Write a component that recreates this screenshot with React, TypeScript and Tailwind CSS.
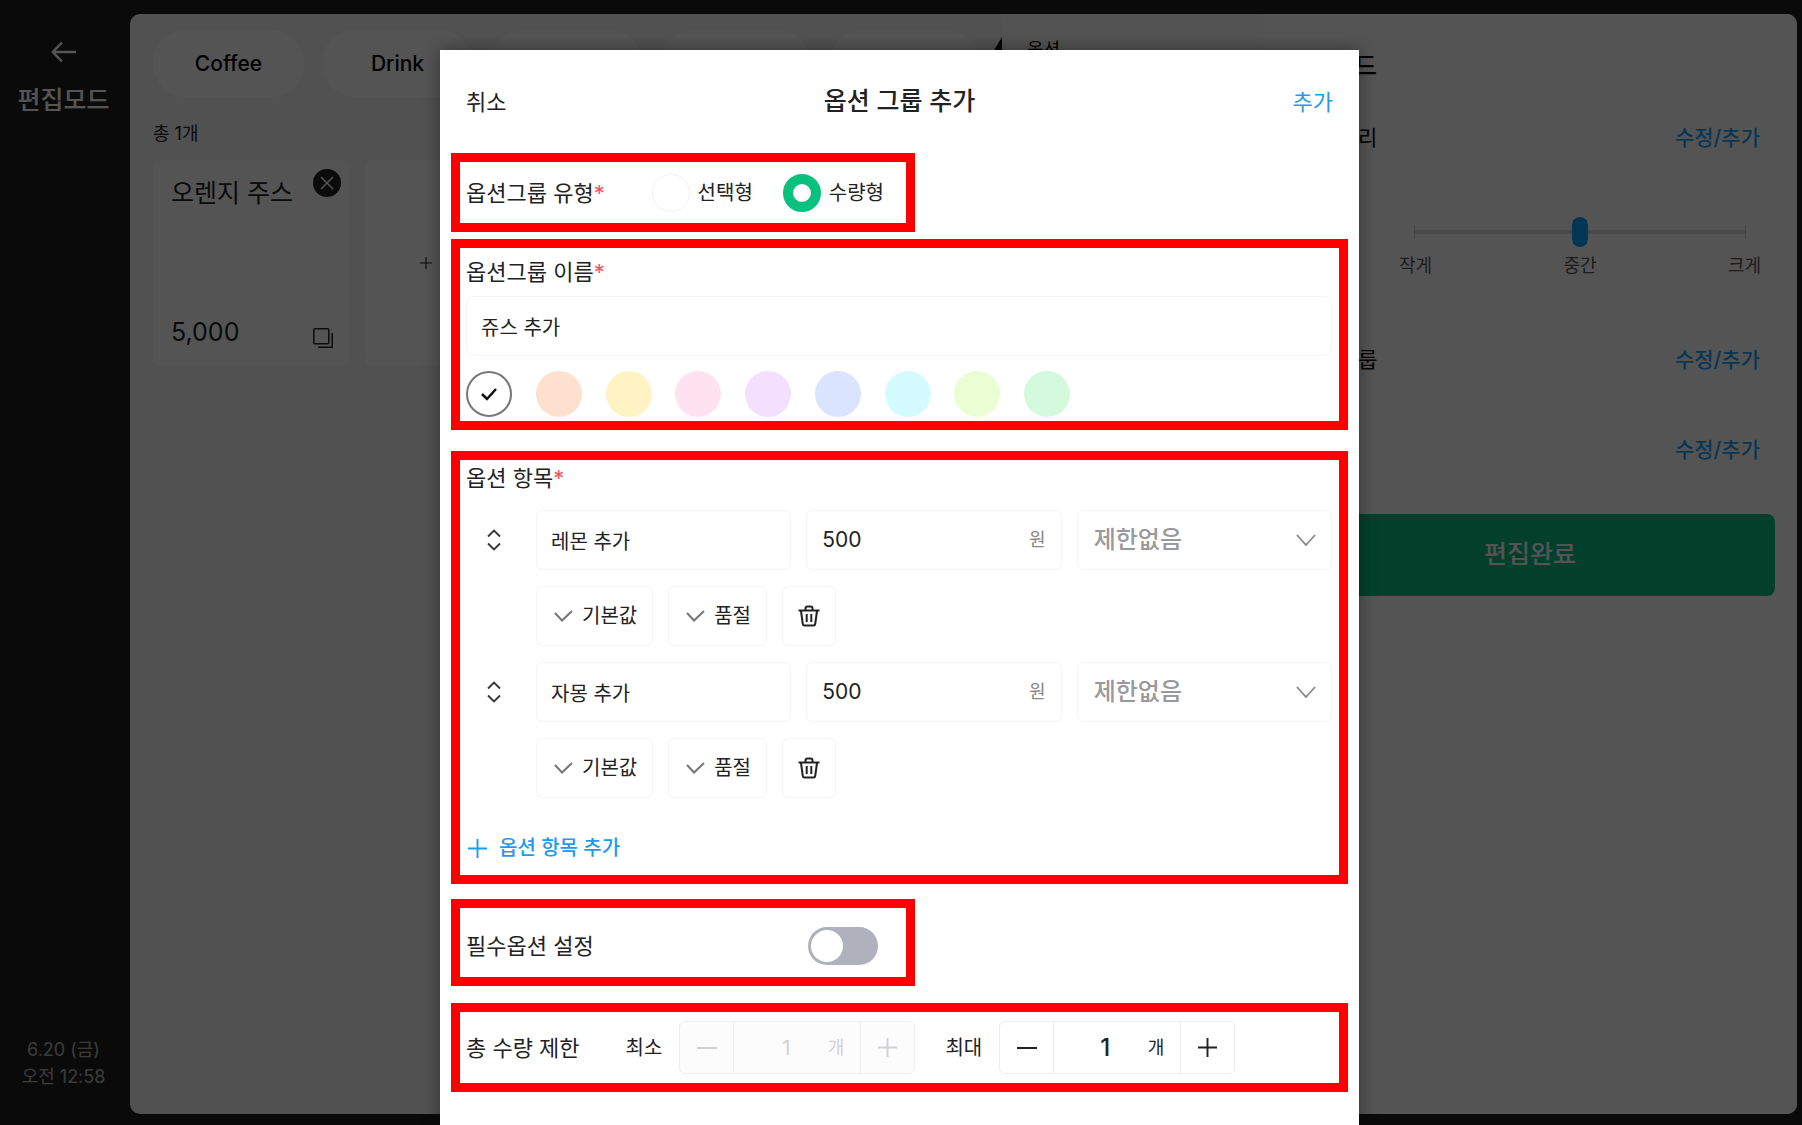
import { useState, type ReactNode } from "react";

const SWATCHES = [
  { name: "흰색", color: "bg-white" },
  { name: "살구색", color: "bg-[#fee0ce]" },
  { name: "노란색", color: "bg-[#fff3c4]" },
  { name: "분홍색", color: "bg-[#fee2ef]" },
  { name: "보라색", color: "bg-[#f3dffe]" },
  { name: "파란색", color: "bg-[#dae4ff]" },
  { name: "하늘색", color: "bg-[#d4fbff]" },
  { name: "연두색", color: "bg-[#ebfed3]" },
  { name: "초록색", color: "bg-[#d4fadd]" },
];

const ITEMS = ["레몬 추가", "자몽 추가"];

const TABS = ["Coffee", "Drink", "Tea", "Dessert", "Bakery"];

export default function App() {
  return (
    <div className="relative flex h-screen overflow-hidden bg-[#212121] pt-3.5 pr-[5px] pb-[11px] font-['Inter','Noto_Sans_CJK_KR',sans-serif] text-[#222]">
      <Sidebar />
      <main className="flex min-w-0 flex-1 overflow-hidden rounded-[10px] bg-[#f5f5f5]">
        <MenuBoard />
        <OrderPanel />
        <EditPanel />
      </main>

      <div className="absolute inset-0 flex justify-center bg-black/67 pt-[50px] pr-[3px]">
        <OptionGroupModal />
      </div>
    </div>
  );
}

function Sidebar() {
  return (
    <aside className="flex w-[130px] shrink-0 flex-col items-center pr-[3px] text-white">
      <button aria-label="뒤로" className="mt-[23px]">
        <svg viewBox="0 0 26 30" fill="none" stroke="currentColor" strokeWidth="2.500" className="h-[30px] w-[26px]">
          <path d="M25 15H2M11 5.500L1.800 15L11 24.500" />
        </svg>
      </button>
      <div className="mt-[17px] text-[25px] leading-8 font-medium">편집모드</div>
      <div className="mt-auto mb-6 text-center text-lg leading-[27px] text-[#b4b4b4]">
        <div>6.20 (금)</div>
        <div>오전 12:58</div>
      </div>
    </aside>
  );
}

function MenuBoard() {
  return (
    <section className="min-w-0 flex-1 overflow-hidden pt-4 pl-[23px]">
      <nav className="flex gap-[18px]">
        {TABS.map((tab) => (
          <button key={tab} className="h-[67px] w-[151px] shrink-0 rounded-full bg-white text-[21px] font-medium text-black">
            {tab}
          </button>
        ))}
      </nav>
      <div className="mt-[23px] text-lg">총 1개</div>

      <div className="mt-3 flex gap-4">
        <article className="flex h-[206px] w-[196px] shrink-0 flex-col justify-between rounded-lg bg-white pt-[9px] pr-2 pb-[18px] pl-[18px]">
          <div className="flex items-start justify-between">
            <h3 className="mt-2 text-[25px] leading-8">오렌지 주스</h3>
            <button aria-label="삭제" className="flex size-7 items-center justify-center rounded-full bg-[#222] text-white">
              <svg viewBox="0 0 14 14" fill="none" stroke="currentColor" strokeWidth="1.500" className="size-3.5">
                <path d="M1 1L13 13M13 1L1 13" />
              </svg>
            </button>
          </div>
          <div className="flex items-end justify-between pr-2">
            <span className="text-[25px] leading-8">5,000</span>
            <button aria-label="복사">
              <svg viewBox="0 0 20 20" fill="none" stroke="currentColor" strokeWidth="1.500" className="size-5">
                <rect x="0.800" y="0.800" width="15" height="15" rx="1" />
                <path d="M19.200 5V19.200H5" />
              </svg>
            </button>
          </div>
        </article>
        <button aria-label="메뉴 추가" className="flex h-[206px] w-[196px] shrink-0 items-center rounded-lg bg-white pl-[55px]">
          <Plus className="size-3" />
        </button>
      </div>
    </section>
  );
}

function OrderPanel() {
  return (
    <section className="relative w-[262px] shrink-0 bg-[#fcfcfc] pt-[22px] pl-[26px] text-lg text-black">
      옵션
      <svg viewBox="0 0 12 26" fill="#111" className="absolute top-[23px] -left-[11px] h-[26px] w-3">
        <path d="M12 0V26H0V20Z" />
      </svg>
    </section>
  );
}

function EditPanel() {
  return (
    <section className="w-[534px] shrink-0 bg-white px-[22px] pt-9 text-black">
      <h2 className="text-[25px] leading-8 font-medium">편집모드</h2>
      <EditRow label="카테고리" className="mt-[17px] h-[78px]" />
      <div className="flex h-[138px] items-start justify-between pt-10 pr-3.5 pl-4">
        <label htmlFor="size" className="text-[21px]">크기</label>
        <div className="w-[362px] text-lg text-[#555]">
          <div className="mx-[15px] flex items-center">
            <div className="h-3 w-px bg-[#ccc]" />
            <input
              id="size"
              type="range"
              min={0}
              max={2}
              defaultValue={1}
              className="h-[30px] min-w-0 flex-1 appearance-none bg-[linear-gradient(#dedede,#dedede)] bg-[length:100%_4px] bg-center bg-no-repeat [&::-webkit-slider-thumb]:h-[30px] [&::-webkit-slider-thumb]:w-4 [&::-webkit-slider-thumb]:appearance-none [&::-webkit-slider-thumb]:rounded-full [&::-webkit-slider-thumb]:bg-[#0aa0ff]"
            />
            <div className="h-3 w-px bg-[#ccc]" />
          </div>
          <div className="mt-1.5 flex justify-between leading-[26px]">
            <span>작게</span>
            <span>중간</span>
            <span>크게</span>
          </div>
        </div>
      </div>
      <EditRow label="옵션그룹" className="h-[90px]" />
      <EditRow label="할인" className="h-[90px]" />
      <button className="mt-[19px] h-[82px] w-full rounded-lg bg-[#0cc183] text-[25px] font-medium text-white">편집완료</button>
    </section>
  );
}

function EditRow({ label, className }: { label: string; className: string }) {
  return (
    <div className={`flex items-center justify-between px-[15px] text-[21px] ${className}`}>
      <span>{label}</span>
      <button className="font-medium text-[#1da5ff]">수정/추가</button>
    </div>
  );
}

function OptionGroupModal() {
  const [color, setColor] = useState(0);
  return (
    <div role="dialog" aria-labelledby="modal-title" className="w-[919px] max-w-full bg-white px-[11px] shadow-[0_0_16px_rgba(0,0,0,0.4)]">
      <header className="flex h-[103px] items-center justify-between px-[15px] pt-px text-[22px]">
        <button>취소</button>
        <h1 id="modal-title" className="text-[25px] font-medium">옵션 그룹 추가</h1>
        <button className="text-[#1d9bf0]">추가</button>
      </header>

      <Framed className="flex h-[79px] w-[464px] items-center">
        <Label required>옵션그룹 유형</Label>
        <div className="ml-auto flex gap-[30px] pr-[15px]">
          <TypeRadio label="선택형" />
          <TypeRadio label="수량형" checked />
        </div>
      </Framed>

      <Framed className="mt-[7px] pt-2 pb-1">
        <Label required htmlFor="group-name">옵션그룹 이름</Label>
        <input
          id="group-name"
          defaultValue="쥬스 추가"
          className="mt-2 block h-[60px] w-full rounded-lg border border-[#f4f4f4] px-3.5 text-xl"
        />
        <div className="mt-[15px] flex w-[604px] justify-between">
          {SWATCHES.map((swatch, i) => (
            <button
              key={swatch.name}
              aria-label={swatch.name}
              onClick={() => setColor(i)}
              className={`flex size-[46px] items-center justify-center rounded-full ${swatch.color} ${color === i ? "border-2 border-[#777]" : ""}`}
            >
              {color === i && (
                <svg viewBox="0 0 16 14" fill="none" stroke="#111" strokeWidth="2.500" className="h-3.5 w-4">
                  <path d="M1 7L6 12L15 2" />
                </svg>
              )}
            </button>
          ))}
        </div>
      </Framed>

      <Framed className="mt-[21px] h-[433px] pt-0.5">
        <Label required>옵션 항목</Label>
        <div className="mt-4 flex flex-col gap-4">
          {ITEMS.map((item) => (
            <OptionItem key={item} name={item} />
          ))}
        </div>
        <button className="mt-9 flex items-center gap-3 pl-0.5 text-xl font-medium text-[#1d9bf0]">
          <Plus className="size-[19px]" /> 옵션 항목 추가
        </button>
      </Framed>

      <Framed className="mt-[15px] flex h-[87px] w-[464px] items-center justify-between pt-1.5">
        <Label htmlFor="required">필수옵션 설정</Label>
        <input
          id="required"
          type="checkbox"
          role="switch"
          className="mr-[21px] flex h-[38px] w-[70px] appearance-none items-center rounded-full bg-[#afb2bd] p-[3px] before:size-8 before:rounded-full before:bg-white checked:justify-end checked:bg-[#09c17f]"
        />
      </Framed>

      <Framed className="mt-[17px] flex h-[89px] items-center">
        <Label>총 수량 제한</Label>
        <div className="ml-[46px] flex gap-[30px]">
          <Stepper id="min" label="최소" disabled />
          <Stepper id="max" label="최대" />
        </div>
      </Framed>
    </div>
  );
}

function Framed({ className, children }: { className: string; children: ReactNode }) {
  return <section className={`border-[9px] border-[#ff0000] pr-[7px] pl-1.5 ${className}`}>{children}</section>;
}

function Label({ children, required, htmlFor }: { children: ReactNode; required?: boolean; htmlFor?: string }) {
  return (
    <label htmlFor={htmlFor} className="text-[22px] leading-8">
      {children}
      {required && <span className="text-[#f5545e]">*</span>}
    </label>
  );
}

function TypeRadio({ label, checked }: { label: string; checked?: boolean }) {
  return (
    <label className="flex items-center gap-2 text-xl">
      <input
        type="radio"
        name="type"
        defaultChecked={checked}
        className="size-[38px] appearance-none rounded-full border border-[#f0f0f0] checked:border-10 checked:border-[#09c17f]"
      />
      {label}
    </label>
  );
}

function OptionItem({ name }: { name: string }) {
  return (
    <div className="grid grid-cols-[55px_1fr_1fr_1fr] gap-x-[15px] gap-y-4">
      <button aria-label="순서 변경" className="flex items-center justify-center">
        <svg viewBox="0 0 14 22" fill="none" stroke="#333" strokeWidth="1.800" className="h-[22px] w-3.5">
          <path d="M1 7.500L7 1.500L13 7.500M1 14.500L7 20.500L13 14.500" />
        </svg>
      </button>
      <input aria-label="항목 이름" defaultValue={name} className="h-[60px] min-w-0 rounded-md border border-[#f4f4f4] px-3.5 text-xl" />
      <label className="flex h-[60px] min-w-0 items-center rounded-md border border-[#f4f4f4] px-[15px] text-[21px]">
        <input aria-label="가격" defaultValue="500" className="min-w-0 flex-1" />
        <span className="text-lg text-[#888]">원</span>
      </label>
      <div className="relative min-w-0">
        <select aria-label="수량 제한" className="h-[60px] w-full appearance-none rounded-md border border-[#f4f4f4] px-4 text-2xl font-medium text-[#999]">
          <option>제한없음</option>
        </select>
        <svg viewBox="0 0 20 12" fill="none" stroke="#888" strokeWidth="1.800" className="pointer-events-none absolute top-6 right-4 h-3 w-5">
          <path d="M1 1L10 11L19 1" />
        </svg>
      </div>

      <div className="col-span-3 col-start-2 flex gap-[15px]">
        <CheckButton>기본값</CheckButton>
        <CheckButton>품절</CheckButton>
        <button aria-label="삭제" className="flex h-[60px] w-[54px] items-center justify-center rounded-md border border-[#f4f4f4]">
          <svg viewBox="0 0 22 22" fill="none" stroke="#222" strokeWidth="2" className="size-[22px]">
            <path d="M0.500 5.500H21.500M7.500 5V3.500Q7.500 1.500 9.500 1.500H12.500Q14.500 1.500 14.500 3.500V5M3 6L4.800 19Q5 20.500 6.500 20.500H15.500Q17 20.500 17.200 19L19 6M8.700 9V17M13.300 9V17" />
          </svg>
        </button>
      </div>
    </div>
  );
}

function CheckButton({ children }: { children: ReactNode }) {
  return (
    <button className="flex h-[60px] items-center gap-[9px] rounded-md border border-[#f4f4f4] pr-[15px] pl-[17px] text-xl">
      <svg viewBox="0 0 19 12" fill="none" stroke="#777" strokeWidth="2" className="h-3 w-[19px]">
        <path d="M1 3L8 10.500L18 1" />
      </svg>
      {children}
    </button>
  );
}

function Stepper({ id, label, disabled }: { id: string; label: string; disabled?: boolean }) {
  return (
    <div className="flex items-center gap-[17px] text-xl">
      <label htmlFor={id}>{label}</label>
      <div className={`flex h-[53px] rounded-md border border-[#eee] ${disabled ? "bg-[#fcfcfd] text-[#d0d0d3]" : ""}`}>
        <button aria-label={`${label} 감소`} disabled={disabled} className="flex w-[54px] items-center justify-center border-r border-[#eee]">
          <svg viewBox="0 0 20 2" fill="currentColor" className="h-0.5 w-5">
            <rect width="20" height="2" />
          </svg>
        </button>
        <div className="flex w-[126px] items-center pr-4">
          <input
            id={id}
            defaultValue="1"
            disabled={disabled}
            className={`w-14 text-right ${disabled ? "text-xl" : "text-2xl font-medium"}`}
          />
          <span className="ml-auto text-lg">개</span>
        </div>
        <button aria-label={`${label} 증가`} disabled={disabled} className="flex w-[54px] items-center justify-center border-l border-[#eee]">
          <Plus className="size-[19px]" />
        </button>
      </div>
    </div>
  );
}

function Plus({ className }: { className: string }) {
  return (
    <svg viewBox="0 0 20 20" fill="none" stroke="currentColor" strokeWidth="2" className={className}>
      <path d="M0 10H20M10 0V20" />
    </svg>
  );
}
